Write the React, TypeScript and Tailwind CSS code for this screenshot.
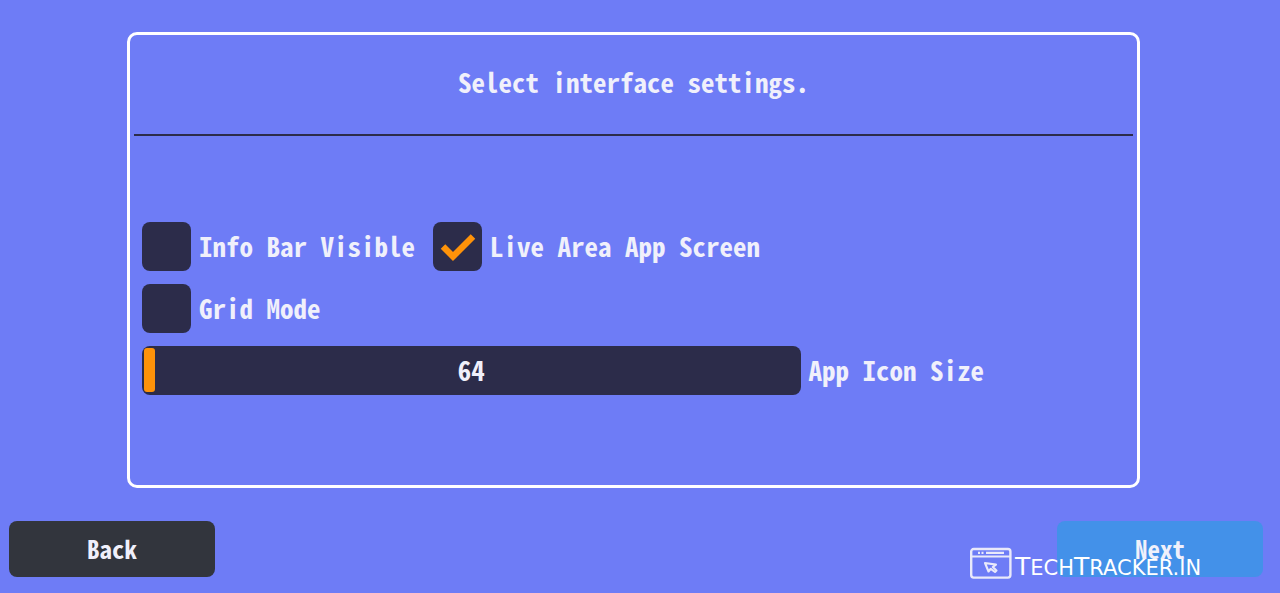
import { useState } from "react";

function Toggle({ label, initial = false }: { label: string; initial?: boolean }) {
  const [on, setOn] = useState(initial);
  return (
    <label className="flex items-center gap-2 whitespace-nowrap">
      <span className="grid size-[49px] shrink-0">
        <input
          type="checkbox"
          checked={on}
          onChange={(e) => setOn(e.target.checked)}
          className="col-start-1 row-start-1 size-full appearance-none rounded-lg bg-[#2c2c4a]"
        />
        {on && (
          <svg
            viewBox="0 0 49 49"
            className="pointer-events-none col-start-1 row-start-1 size-full"
            fill="none"
            stroke="#fe9209"
            strokeWidth="6.4"
            aria-hidden="true"
          >
            <path d="M10 24.5 20 34.5 40 14.5" />
          </svg>
        )}
      </span>
      {label}
    </label>
  );
}

function IconSizeSlider() {
  const [size, setSize] = useState(64);
  return (
    <div className="flex items-center gap-2">
      <div className="grid w-[67%] items-center">
        <input
          id="icon-size"
          type="range"
          min={64}
          max={128}
          value={size}
          onChange={(e) => setSize(Number(e.target.value))}
          className="col-start-1 row-start-1 h-[49px] w-full appearance-none rounded-lg bg-[#2c2c4a] px-0.5 [&::-webkit-slider-thumb]:h-[44px] [&::-webkit-slider-thumb]:w-[11px] [&::-webkit-slider-thumb]:appearance-none [&::-webkit-slider-thumb]:rounded-[3px] [&::-webkit-slider-thumb]:bg-[#fe9209]"
        />
        <output htmlFor="icon-size" className="pointer-events-none col-start-1 row-start-1 text-center">
          {size}
        </output>
      </div>
      <label htmlFor="icon-size" className="whitespace-nowrap">App Icon Size</label>
    </div>
  );
}

function Watermark() {
  return (
    <div className="pointer-events-none absolute right-[56px] bottom-[14px] flex w-[254px] items-end gap-[3px] text-white">
      <svg width="42" height="32" viewBox="0 0 42 32" className="shrink-0" fill="none" stroke="#e9e9fa" aria-hidden="true">
        <rect x="1.2" y="2" width="39.2" height="28.6" rx="2.5" strokeWidth="2.4" />
        <path d="M1 9.5H40.5" strokeWidth="1.8" />
        <path d="M8 5.8H10M11.5 5.8H13.5M16 5.8H34" strokeWidth="2.2" />
        <path d="M15 16 18.5 24.5 20.8 21.8 25 25 26.5 23.5 22.8 20 26 17.6Z" strokeWidth="2.1" strokeLinejoin="round" />
      </svg>
      <span className="font-['DejaVu_Sans','Noto_Sans',sans-serif] text-[21px] leading-[22px] font-normal">
        <span className="text-[25px]">T</span>ECH<span className="text-[25px]">T</span>RACKER.IN
      </span>
    </div>
  );
}

export default function App() {
  return (
    <div className="relative flex min-h-screen flex-col bg-[#6e7cf6] pt-8 pb-4 font-['Noto_Sans_Mono_CJK_JP','DejaVu_Sans_Mono',monospace] text-[27px] leading-8 font-bold text-[#f0f0fb]">
      <main className="mr-[140px] ml-[127px] flex flex-1 flex-col rounded-[10px] border-3 border-white">
        <h1 className="mx-1 border-b-2 border-[#2c2c4a] pt-[31px] pb-9 text-center">Select interface settings.</h1>
        <form className="flex flex-1 flex-col justify-center gap-[13px] px-3 pb-[5px]">
          <div className="flex gap-[18px]">
            <Toggle label="Info Bar Visible" />
            <Toggle label="Live Area App Screen" initial />
          </div>
          <Toggle label="Grid Mode" />
          <IconSizeSlider />
        </form>
      </main>
      <footer className="mt-[33px] flex justify-between pr-[17px] pl-[9px] text-[25px]">
        <button type="button" className="h-14 w-[206px] rounded-lg bg-[#32353d] pb-0.5">Back</button>
        <button type="button" className="h-14 w-[206px] rounded-lg bg-[#4391e9] pb-0.5">Next</button>
      </footer>
      <Watermark />
    </div>
  );
}
